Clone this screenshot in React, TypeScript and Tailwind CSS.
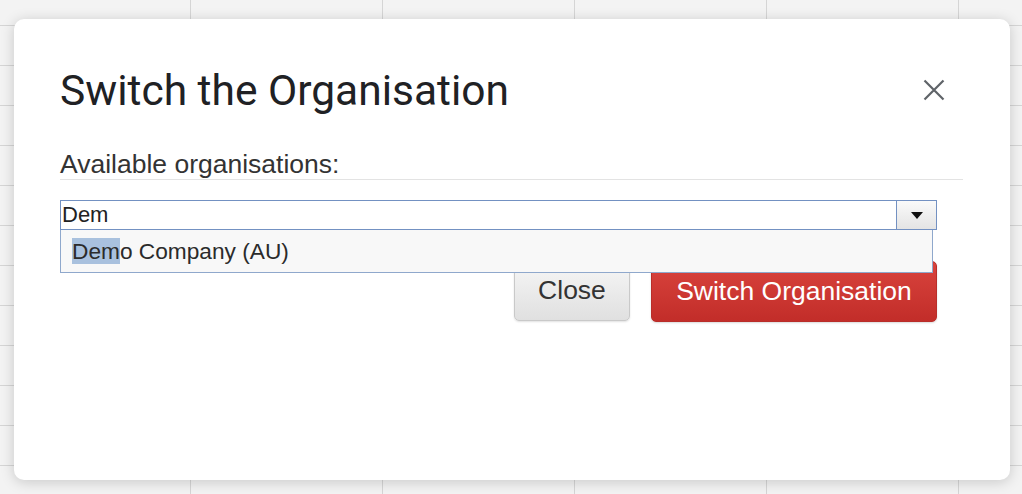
import React from 'react';

const CloseIcon: React.FC = () => (
  <svg width="22" height="22" viewBox="0 0 22 22" fill="none" stroke="#5f6368" strokeWidth="2.2">
    <path d="M1.5 1.5 20.5 20.5M20.5 1.5 1.5 20.5" />
  </svg>
);

export default function App() {
  return (
    <div className="w-[1022px] h-[494px] overflow-hidden bg-[#f3f3f3] bg-[linear-gradient(to_right,#d5d5d5_1px,transparent_1px),linear-gradient(to_bottom,#d5d5d5_1px,transparent_1px)] bg-[size:192px_40px] bg-[position:190px_25px] pt-[19px] pl-[14px]">
      {/* Dialog */}
      <div className="w-[996px] h-[461px] rounded-[10px] bg-white shadow-[0_2px_14px_rgba(0,0,0,0.18)] pt-[47px] pl-[46px] pr-[47px] font-['Liberation_Sans',Arial,sans-serif]">
        <div className="flex items-center justify-between h-[50px]">
          <h2 className="font-['Roboto',sans-serif] text-[42.5px] leading-[50px] text-[#202124] font-normal">
            Switch the Organisation
          </h2>
          <button className="mr-[18px] -mt-[2px] flex items-center justify-center">
            <CloseIcon />
          </button>
        </div>

        <div className="mt-[33px] h-[31px] text-[26.5px] leading-[30px] text-[#333] border-b border-[#e3e3e3]">
          Available organisations:
        </div>

        <div className="relative mt-[20px] w-[877px]">
          <div className="flex h-[30px] border border-[#7391c2] bg-white">
            <div className="flex-1 pl-[1px] text-[22px] leading-[28px] text-[#222]">Dem</div>
            <div className="w-[40px] flex items-center justify-center border-l border-[#7391c2] bg-gradient-to-b from-[#fafafa] to-[#e4e4e4]">
              <svg width="12" height="7" viewBox="0 0 12 7">
                <polygon points="0,0 12,0 6,7" fill="#111" />
              </svg>
            </div>
          </div>

          {/* Autocomplete list */}
          <div className="absolute left-0 top-[30px] z-10 w-[873px] border border-t-0 border-[#8fa8cc] bg-[#f8f8f8] pt-[9px] pb-[8px] pl-[11px] text-[22.7px] leading-[25px] text-[#2b2b2b]">
            <span className="bg-[#a9c1de]">Dem</span>o Company (AU)
          </div>

          <div className="mt-[31px] flex justify-end gap-[21px]">
            <button className="w-[116px] h-[60px] rounded-[5px] border border-[#c9c9c9] bg-gradient-to-b from-[#f6f6f6] to-[#e0e0e0] shadow-[0_1px_2px_rgba(0,0,0,0.12)] text-[26.5px] leading-none text-[#333] pb-[1px]">
              Close
            </button>
            <button className="w-[286px] h-[61px] rounded-[5px] border border-[#b92e2a] bg-gradient-to-b from-[#d9433d] to-[#c22d29] shadow-[0_1px_2px_rgba(0,0,0,0.15)] text-[26.5px] leading-none text-white pb-[1px]">
              Switch Organisation
            </button>
          </div>
        </div>
      </div>
    </div>
  );
}
